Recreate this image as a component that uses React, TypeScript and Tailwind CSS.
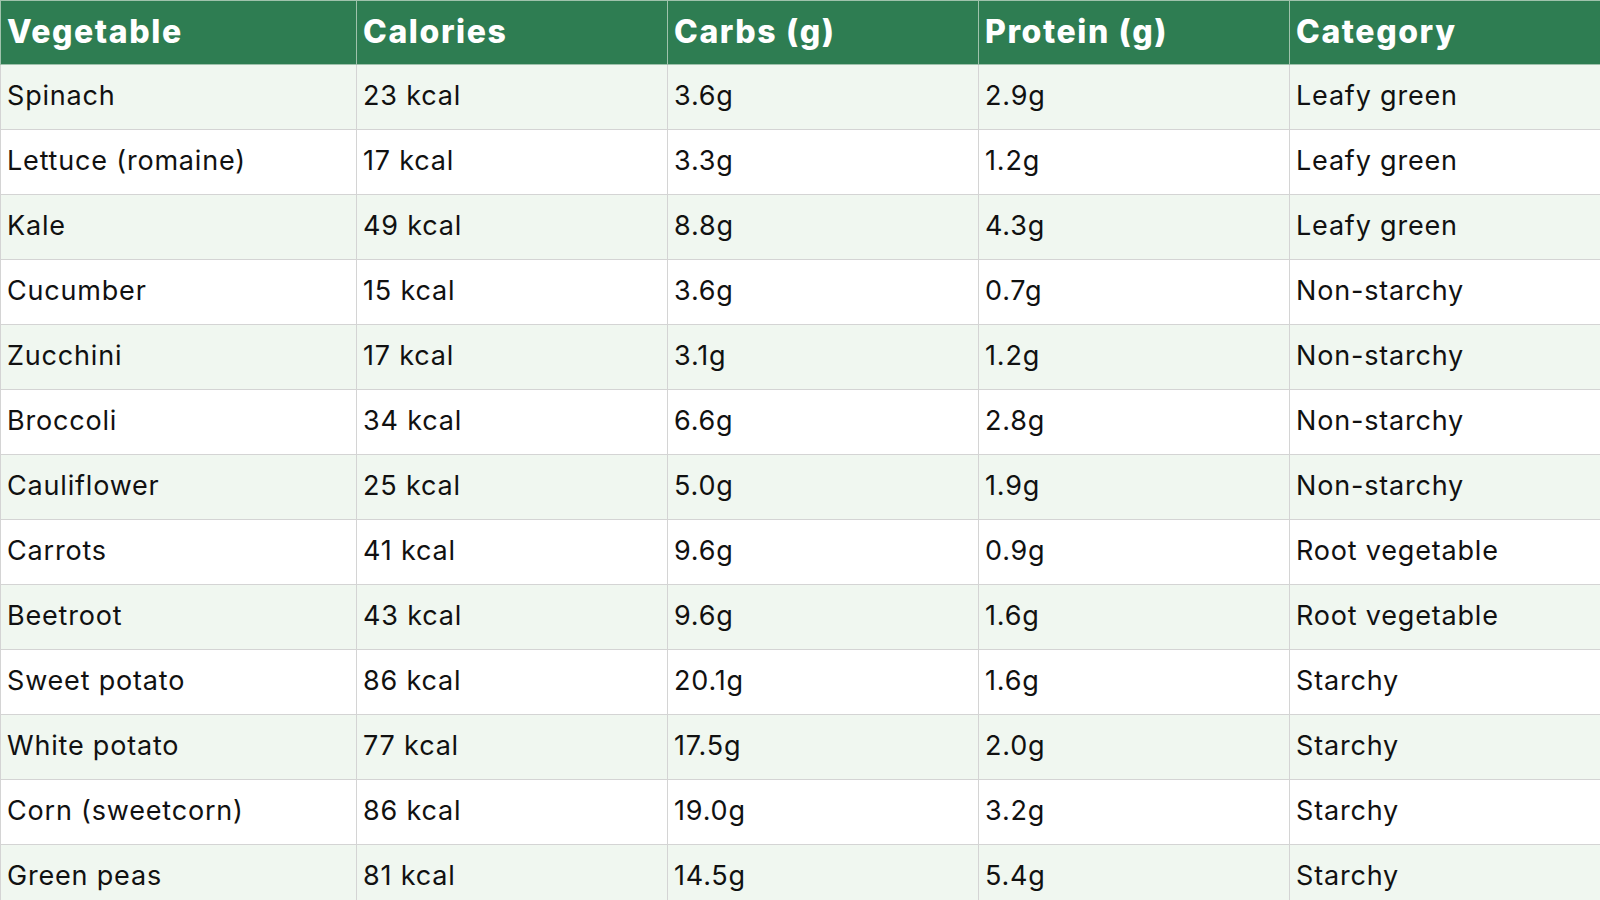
const rows: [string, string, string, string, string][] = [
  ["Spinach", "23 kcal", "3.6g", "2.9g", "Leafy green"],
  ["Lettuce (romaine)", "17 kcal", "3.3g", "1.2g", "Leafy green"],
  ["Kale", "49 kcal", "8.8g", "4.3g", "Leafy green"],
  ["Cucumber", "15 kcal", "3.6g", "0.7g", "Non-starchy"],
  ["Zucchini", "17 kcal", "3.1g", "1.2g", "Non-starchy"],
  ["Broccoli", "34 kcal", "6.6g", "2.8g", "Non-starchy"],
  ["Cauliflower", "25 kcal", "5.0g", "1.9g", "Non-starchy"],
  ["Carrots", "41 kcal", "9.6g", "0.9g", "Root vegetable"],
  ["Beetroot", "43 kcal", "9.6g", "1.6g", "Root vegetable"],
  ["Sweet potato", "86 kcal", "20.1g", "1.6g", "Starchy"],
  ["White potato", "77 kcal", "17.5g", "2.0g", "Starchy"],
  ["Corn (sweetcorn)", "86 kcal", "19.0g", "3.2g", "Starchy"],
  ["Green peas", "81 kcal", "14.5g", "5.4g", "Starchy"],
];

const headers = ["Vegetable", "Calories", "Carbs (g)", "Protein (g)", "Category"];

export default function App() {
  return (
    <div className="h-[900px] w-[1600px] overflow-hidden bg-white font-['Inter',sans-serif] text-[#111]">
      <table className="w-[1600px] table-fixed border-collapse">
        <colgroup>
          <col className="w-[356px]" />
          <col className="w-[311px]" />
          <col className="w-[311px]" />
          <col className="w-[311px]" />
          <col className="w-[311px]" />
        </colgroup>
        <thead>
          <tr className="h-[64px] bg-[#2e7d52]">
            {headers.map((h) => (
              <th
                key={h}
                className="border border-[#9fc2ac] pb-[2px] pl-[6px] text-left text-[32px] font-extrabold tracking-[0.05em] text-white"
              >
                {h}
              </th>
            ))}
          </tr>
        </thead>
        <tbody>
          {rows.map((r, i) => (
            <tr key={r[0]} className={i % 2 === 0 ? "h-[65px] bg-[#f0f7f0]" : "h-[65px] bg-white"}>
              {r.map((c, j) => (
                <td key={j} className="border border-[#d4d4d4] pb-[2px] pl-[6px] text-[27px] tracking-[0.03em]">
                  {c}
                </td>
              ))}
            </tr>
          ))}
        </tbody>
      </table>
    </div>
  );
}
